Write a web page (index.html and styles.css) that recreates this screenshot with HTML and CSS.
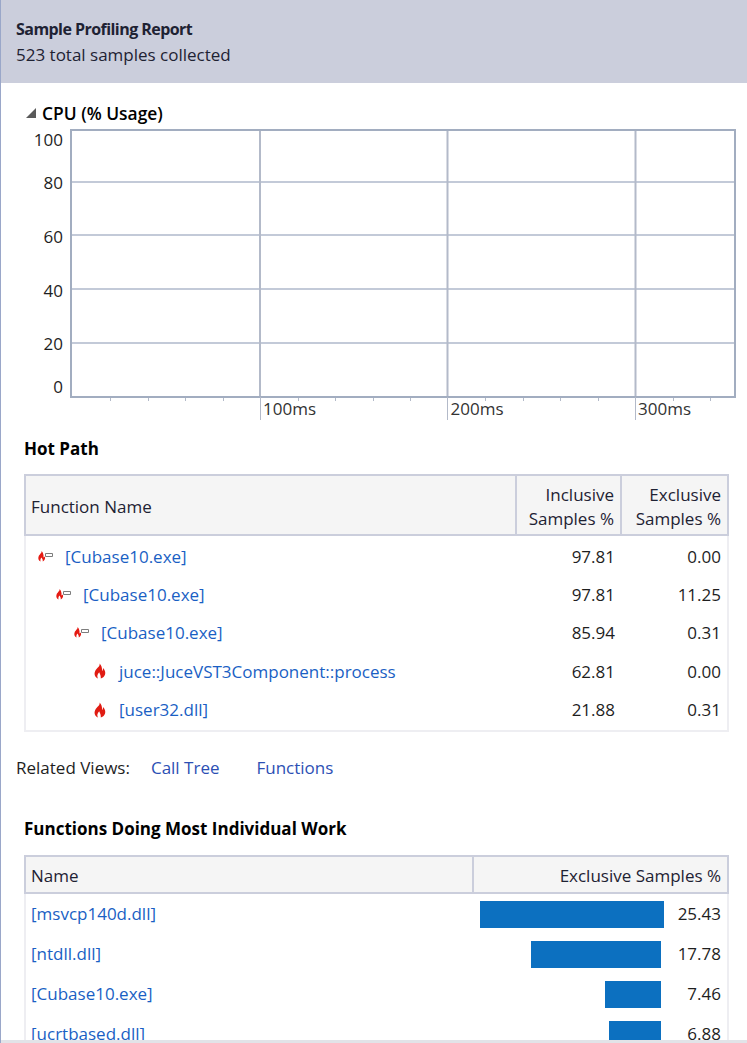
FILE: index.html
```html
<!DOCTYPE html>
<html lang="en">
<head>
  <meta charset="UTF-8" />
  <title>Sample Profiling Report</title>
  <link rel="stylesheet" href="styles.css">
</head>
<body>
  <header class="banner">
    <div class="banner-title">Sample Profiling Report</div>
    <div class="banner-sub">523 total samples collected</div>
  </header>

  <section class="cpu">
    <div class="cpu-title"><span class="arrow"></span>CPU (% Usage)</div>
    <div class="chart">
      <div class="y-labels">
        <span class="y-100">100</span>
        <span class="y-step">80</span>
        <span class="y-step">60</span>
        <span class="y-step">40</span>
        <span class="y-step">20</span>
        <span class="y-0">0</span>
      </div>
      <div class="plot-wrap">
        <svg class="plot" width="676" height="294" viewBox="0 0 676 294">
          <g stroke="#c3cad8" stroke-width="2">
            <path d="M2 53H664M2 106H664M2 160H664M2 214H664" />
          </g>
          <g stroke="#b3bac9" stroke-width="2">
            <path d="M190 0V267M377.5 0V267M565.5 0V267" />
          </g>
          <rect x="1" y="1" width="664" height="267" fill="none" stroke="#a2adc0" stroke-width="2" />
          <g stroke="#b3bac9" stroke-width="1">
            <path d="M40.5 269V272M78.5 269V272M115.5 269V272M153.5 269V272M228.5 269V272M265.5 269V272M303.5 269V272M340.5 269V272M415.5 269V272M453.5 269V272M490.5 269V272M528.5 269V272M603.5 269V272M640.5 269V272" />
            <path d="M190.5 268V291M377.5 268V291M565.5 268V291" />
          </g>
        </svg>
        <div class="x-labels">
          <span>100ms</span>
          <span>200ms</span>
          <span>300ms</span>
        </div>
      </div>
    </div>
  </section>

  <section class="hot-path">
    <h2>Hot Path</h2>
    <div class="table">
      <div class="hp-head">
        <div class="th">Function Name</div>
        <div class="th num">Inclusive<br>Samples %</div>
        <div class="th num">Exclusive<br>Samples %</div>
      </div>
      <div class="hp-body">
        <div class="hp-row">
          <div class="name indent-0">
            <svg class="icon" width="17" height="13" viewBox="0 0 17 13"><use href="#flame-small" /></svg>
            <a>[Cubase10.exe]</a>
          </div>
          <div class="val">97.81</div>
          <div class="val">0.00</div>
        </div>
        <div class="hp-row">
          <div class="name indent-1">
            <svg class="icon" width="17" height="13" viewBox="0 0 17 13"><use href="#flame-small" /></svg>
            <a>[Cubase10.exe]</a>
          </div>
          <div class="val">97.81</div>
          <div class="val">11.25</div>
        </div>
        <div class="hp-row">
          <div class="name indent-2">
            <svg class="icon" width="17" height="13" viewBox="0 0 17 13"><use href="#flame-small" /></svg>
            <a>[Cubase10.exe]</a>
          </div>
          <div class="val">85.94</div>
          <div class="val">0.31</div>
        </div>
        <div class="hp-row">
          <div class="name indent-3">
            <svg class="icon" width="17" height="16" viewBox="0 0 17 16"><use href="#flame-big" /></svg>
            <a>juce::JuceVST3Component::process</a>
          </div>
          <div class="val">62.81</div>
          <div class="val">0.00</div>
        </div>
        <div class="hp-row">
          <div class="name indent-3">
            <svg class="icon" width="17" height="16" viewBox="0 0 17 16"><use href="#flame-big" /></svg>
            <a>[user32.dll]</a>
          </div>
          <div class="val">21.88</div>
          <div class="val">0.31</div>
        </div>
      </div>
    </div>
  </section>

  <div class="related">
    <span>Related Views:</span>
    <a>Call Tree</a>
    <a>Functions</a>
  </div>

  <section class="functions">
    <h2>Functions Doing Most Individual Work</h2>
    <div class="table table-cut">
      <div class="fn-head">
        <div class="th">Name</div>
        <div class="th num">Exclusive Samples %</div>
      </div>
      <div class="fn-row">
        <a>[msvcp140d.dll]</a>
        <div class="bar-cell"><div class="bar bar-top" style="width:184px"></div></div>
        <div class="val">25.43</div>
      </div>
      <div class="fn-row">
        <a>[ntdll.dll]</a>
        <div class="bar-cell"><div class="bar" style="width:130px"></div></div>
        <div class="val">17.78</div>
      </div>
      <div class="fn-row">
        <a>[Cubase10.exe]</a>
        <div class="bar-cell"><div class="bar" style="width:56px"></div></div>
        <div class="val">7.46</div>
      </div>
      <div class="fn-row">
        <a>[ucrtbased.dll]</a>
        <div class="bar-cell"><div class="bar" style="width:52px"></div></div>
        <div class="val">6.88</div>
      </div>
    </div>
  </section>

  <div class="scrollbar"></div>

  <svg width="0" height="0" class="defs">
    <symbol id="flame-small" viewBox="0 0 17 13">
      <path d="M5.5 1C6 3 3.6 4.2 2.6 6.4C1.8 8.4 2.6 10.6 4.6 11.4C4 9.8 4.6 8.6 5.6 7.6C5.9 8.8 7 9.4 6.8 11.4C8.8 10.6 9.6 8.6 8.8 6.6C8.5 7.1 8 7.4 7.5 7.4C7.8 5 7.2 2.6 5.5 1Z" fill="#e51a12" />
      <path d="M9.5 3.5H16.5V6.5H9.5Z" fill="#fff" stroke="#7d7d7d" stroke-width="1" />
    </symbol>
    <symbol id="flame-big" viewBox="0 0 17 16">
      <path d="M9.5 0.5C10.5 3.2 7 4.6 5.2 8C3.7 11 5 14.4 8 15.5C6.8 13.5 7.2 11.5 9.3 9.3C9.5 10.8 11 11.8 10.8 15.5C14 14.4 16 11.5 15 8.2C14.6 7 14 6 13 5C13 6.5 12.7 7.5 12 8C12.3 5 11.5 2.2 9.5 0.5Z" fill="#e01b12" />
    </symbol>
  </svg>
</body>
</html>
```

FILE: styles.css
```css
body {
  margin: 0;
  height: 1043px;
  overflow: hidden;
  position: relative;
  background: #fff;
  border-left: 1px solid #9aa7c9;
  font-family: 'Open Sans', 'Noto Sans', sans-serif;
  font-size: 17px;
  color: #1e1e1e;
  box-sizing: border-box;
}

a {
  color: #1a5fc4;
  text-decoration: none;
}

h2 {
  margin: 0;
  font-size: 17px;
  line-height: 22px;
  font-weight: 700;
  color: #000;
}

.banner {
  height: 83px;
  box-sizing: border-box;
  padding: 18px 0 0 15px;
  background: #cbcedc;
  color: #1e2233;
  line-height: 22px;
}

.banner-title {
  font-weight: 700;
  font-size: 16px;
  letter-spacing: -0.55px;
  height: 26px;
}

/* CPU chart */
.cpu {
  padding-top: 19px;
}

.cpu-title {
  display: flex;
  align-items: center;
  height: 22px;
  padding-left: 25px;
  color: #000;
  font-weight: 600;
  font-size: 17.4px;
}

.arrow {
  width: 0;
  height: 0;
  border-style: solid;
  border-width: 0 0 10px 10px;
  border-color: transparent transparent #5a5a5a transparent;
  margin-right: 6px;
}

.chart {
  display: flex;
  margin-top: 5px;
}

.y-labels {
  width: 62px;
  display: flex;
  flex-direction: column;
  align-items: flex-end;
  line-height: 22px;
}

.y-100 {
  height: 22px;
}

.y-step {
  height: 53.7px;
}

.y-100 + .y-step {
  margin-top: 21px;
  height: 54px;
}

.y-0 {
  height: 22px;
  margin-top: -11px;
}

.plot-wrap {
  margin-left: 7px;
  position: relative;
}

.plot {
  display: block;
}

/* sits over the tick lines */
.x-labels {
  position: absolute;
  top: 269px;
  left: 193px;
  display: flex;
  line-height: 22px;
  color: #333;
}

.x-labels span {
  width: 187.5px;
}

.x-labels span:last-child {
  width: auto;
}

/* tables */
.hot-path {
  margin: 15px 0 0 23px;
}

.table {
  width: 705px;
  box-sizing: border-box;
  border: 2px solid #eeeef2;
  border-top: none;
  margin-top: 14px;
}

.th {
  background: #f5f5f5;
  border: 2px solid #cbcedc;
  border-left-width: 0;
  padding: 3px 6px 0 5px;
  color: #1e2233;
  display: flex;
  align-items: center;
  line-height: 24px;
}

.th:first-child {
  border-left-width: 2px;
  margin-left: -2px;
}

.th.num {
  justify-content: flex-end;
  text-align: right;
}

.hp-head {
  display: grid;
  grid-template-columns: 491px 105px 107px;
  height: 62px;
  margin-right: -2px;
}

.hp-row {
  display: grid;
  grid-template-columns: 491px 104px 1fr;
  height: 38.4px;
  align-items: center;
}

.hp-body {
  padding: 1px 0;
}

.name {
  display: flex;
  align-items: center;
}

.icon {
  margin-right: 12px;
  flex: none;
}

.indent-0 { padding-left: 10px; }
.indent-1 { padding-left: 28px; }
.indent-2 { padding-left: 46px; }
.indent-3 { padding-left: 64px; }

.val {
  text-align: right;
  padding-right: 6px;
}

.related {
  display: flex;
  margin: 25px 0 0 15px;
  line-height: 22px;
}

.related a {
  color: #2c4fb4;
  margin-left: 21px;
}

.related a + a {
  margin-left: 37px;
}

.functions {
  margin: 39px 0 0 23px;
}

.table-cut {
  margin-top: 15px;
}

.fn-head {
  display: grid;
  grid-template-columns: 448px 255px;
  height: 39px;
  margin-right: -2px;
}

.fn-row {
  display: grid;
  grid-template-columns: 443px 1fr 66px;
  height: 40px;
  align-items: center;
  padding-left: 5px;
}

.bar-cell {
  display: flex;
  justify-content: flex-end;
}

.bar {
  height: 27px;
  flex: none;
  margin-top: 2px;
  background: #0c70c0;
}

.bar-top {
  margin-right: -3px;
}

.scrollbar {
  position: absolute;
  left: 0;
  right: 0;
  bottom: 0;
  height: 3px;
  background: #e2e3e8;
}

.defs {
  position: absolute;
}
```
